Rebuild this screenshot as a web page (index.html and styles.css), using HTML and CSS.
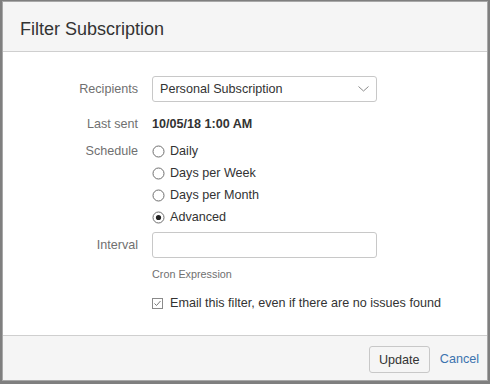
FILE: index.html
```html
<!DOCTYPE html>
<html lang="en">
<head>
<meta charset="utf-8">
<title>Filter Subscription</title>
<link rel="stylesheet" href="styles.css">
</head>
<body>
<div class="dialog">
  <header class="dialog-header">
    <h2 class="dialog-title">Filter Subscription</h2>
  </header>
  <div class="dialog-body">
    <div class="form-row row-recipients">
      <span class="form-label">Recipients</span>
      <div class="select">
        <span class="select-text">Personal Subscription</span>
        <svg class="chevron" width="11" height="6" viewBox="0 0 11 6"><polyline points="0.5,0.5 5.5,5 10.5,0.5" fill="none" stroke="#8a8a8a" stroke-width="1"/></svg>
      </div>
    </div>
    <div class="form-row row-last">
      <span class="form-label">Last sent</span>
      <span class="value">10/05/18 1:00 AM</span>
    </div>
    <div class="form-row row-schedule">
      <span class="form-label">Schedule</span>
      <div class="radio-group">
        <div class="radio-item"><svg class="radio" width="13" height="13" viewBox="0 0 13 13"><circle cx="6.5" cy="6.5" r="5.5" fill="#fff" stroke="#6e6e6e"/></svg>Daily</div>
        <div class="radio-item"><svg class="radio" width="13" height="13" viewBox="0 0 13 13"><circle cx="6.5" cy="6.5" r="5.5" fill="#fff" stroke="#6e6e6e"/></svg>Days per Week</div>
        <div class="radio-item"><svg class="radio" width="13" height="13" viewBox="0 0 13 13"><circle cx="6.5" cy="6.5" r="5.5" fill="#fff" stroke="#6e6e6e"/></svg>Days per Month</div>
        <div class="radio-item"><svg class="radio" width="13" height="13" viewBox="0 0 13 13"><circle cx="6.5" cy="6.5" r="5.5" fill="#fff" stroke="#6e6e6e"/><circle cx="6.5" cy="6.5" r="2.6" fill="#222"/></svg>Advanced</div>
      </div>
    </div>
    <div class="form-row row-interval">
      <span class="form-label">Interval</span>
      <div class="field">
        <div class="text-input"></div>
        <div class="description">Cron Expression</div>
      </div>
    </div>
    <div class="form-row row-check">
      <span class="form-label"></span>
      <div class="check-item"><svg class="checkbox" width="11" height="11" viewBox="0 0 11 11"><rect x="0.5" y="0.5" width="10" height="10" fill="#fff" stroke="#8a8a8a"/><polyline points="2.5,5.5 4.5,7.5 8.5,3" fill="none" stroke="#777" stroke-width="1"/></svg>Email this filter, even if there are no issues found</div>
    </div>
  </div>
  <footer class="dialog-footer">
    <button class="button" type="button">Update</button>
    <a class="cancel" href="#">Cancel</a>
  </footer>
</div>
</body>
</html>
```
FILE: styles.css
```css
html, body {
  margin: 0;
  padding: 0;
}
body {
  background: #7f7f7f;
  padding: 1px 2px 3px 2px;
  font-family: "Liberation Sans", Arial, sans-serif;
  font-size: 12.6px;
  color: #333;
}
.dialog {
  width: 486px;
  height: 380px;
  box-sizing: border-box;
  border: 1px solid #a8a8a8;
  background: #fff;
  display: flex;
  flex-direction: column;
}
.dialog-header {
  background: #f5f5f5;
  border-bottom: 1px solid #cfcfcf;
  height: 50px;
  box-sizing: border-box;
  padding: 17px 17px 0 17px;
}
.dialog-title {
  margin: 0;
  font-size: 18px;
  font-weight: normal;
  line-height: 20px;
  color: #333;
}
.dialog-body {
  flex: 1;
  padding: 24px 0 0 0;
}
.form-row {
  display: flex;
  gap: 14px;
}
.form-label {
  width: 135px;
  flex: none;
  text-align: right;
  color: #707070;
  line-height: 22px;
}
.row-recipients {
  align-items: center;
}
.select {
  width: 225px;
  height: 26px;
  box-sizing: border-box;
  border: 1px solid #c8c8c8;
  border-radius: 3px;
  display: flex;
  align-items: center;
  justify-content: space-between;
  padding: 0 7px 0 7px;
  color: #333;
}
.chevron {
  display: block;
}
.row-last {
  margin-top: 11px;
  line-height: 22px;
}
.value {
  font-weight: bold;
  color: #333;
}
.row-schedule {
  margin-top: 5px;
}
.radio-group {
  display: flex;
  flex-direction: column;
}
.radio-item {
  display: flex;
  align-items: center;
  height: 22px;
  line-height: 22px;
}
.radio {
  display: block;
  margin-right: 5px;
  flex: none;
}
.row-interval {
  margin-top: 4px;
}
.row-interval .form-label {
  line-height: 26px;
}
.text-input {
  width: 225px;
  height: 26px;
  box-sizing: border-box;
  border: 1px solid #c8c8c8;
  border-radius: 3px;
}
.description {
  margin-top: 8px;
  font-size: 10.8px;
  line-height: 16px;
  color: #707070;
}
.row-check {
  margin-top: 10px;
}
.check-item {
  display: flex;
  align-items: center;
  height: 22px;
  line-height: 22px;
}
.checkbox {
  display: block;
  margin-right: 7px;
  flex: none;
}
.dialog-footer {
  background: #f5f5f5;
  border-top: 1px solid #cfcfcf;
  height: 45px;
  box-sizing: border-box;
  padding: 10px 8px 0 0;
  display: flex;
  justify-content: flex-end;
  align-items: flex-start;
  gap: 10px;
}
.button {
  font-family: "Liberation Sans", Arial, sans-serif;
  font-size: 12.6px;
  color: #333;
  background: #f5f5f5;
  border: 1px solid #c8c8c8;
  border-radius: 3px;
  height: 27px;
  width: 61px;
  padding: 0;
  margin: 0;
}
.cancel {
  color: #3b73af;
  text-decoration: none;
  line-height: 27px;
}
```
